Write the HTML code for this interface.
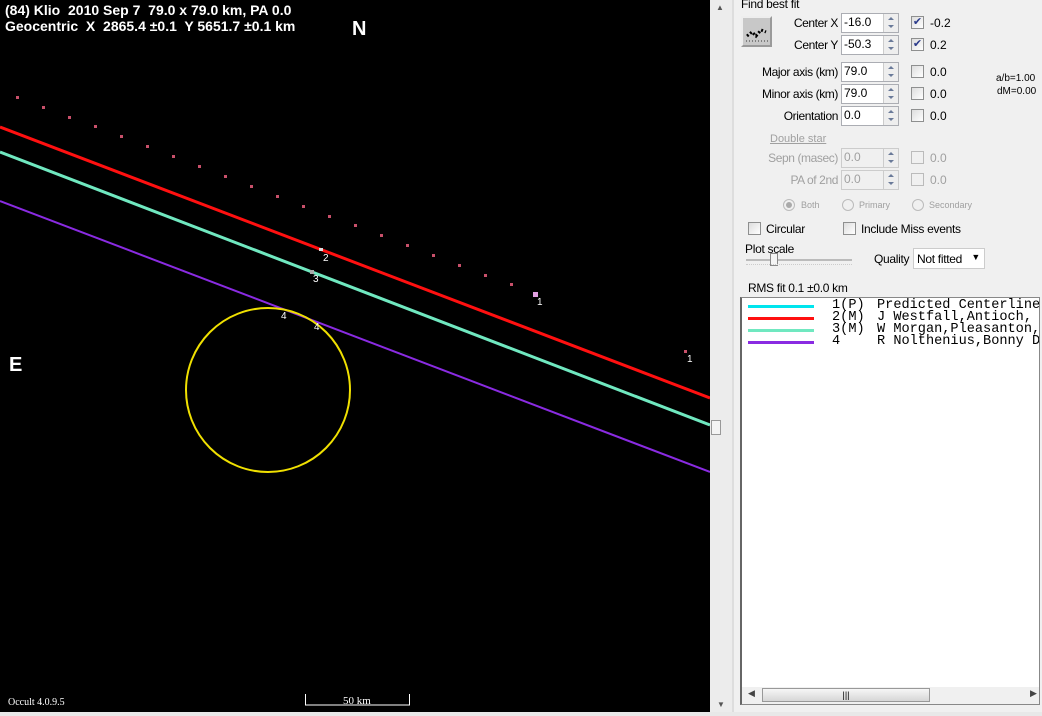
<!DOCTYPE html>
<html><head><meta charset="utf-8"><style>
*{margin:0;padding:0;box-sizing:border-box}
body{width:1042px;height:716px;overflow:hidden;background:#f0f0f0;position:relative;font-family:"Liberation Sans",Arial,sans-serif;font-size:12px;color:#000}
.a{position:absolute;white-space:nowrap}
.r{position:absolute;right:204px;white-space:nowrap;letter-spacing:-0.4px;font-size:12px}
.inp{position:absolute;height:20px;width:58px;background:#fff;border:1px solid #abadb3;font-size:12px;padding:1px 2px}
.spin{position:absolute;right:0;top:0;width:15px;height:18px;border-left:1px solid #ccc;background:#eee}
.spin:before{content:"";position:absolute;left:4px;top:3px;border:3px solid transparent;border-bottom:3px solid #6a7a99;border-top:0}
.spin:after{content:"";position:absolute;left:4px;top:11px;border:3px solid transparent;border-top:3px solid #6a7a99;border-bottom:0}
.cb{position:absolute;width:13px;height:13px;border:1px solid #8e8f8f;background:linear-gradient(135deg,#ddd,#fff)}
.dis{color:#a0a0a0}
.dis .inp{background:#f0f0f0;color:#a0a0a0;border-color:#ccc}
.mono{font-family:"Liberation Mono",monospace;font-size:13.6px;white-space:pre}
</style></head><body>
<svg class="a" style="left:0;top:0" width="710" height="712">
<rect width="710" height="712" fill="#000"/>
<g fill="#c8506a">
<rect x="16" y="96" width="3" height="3"/><rect x="42" y="106" width="3" height="3"/><rect x="68" y="116" width="3" height="3"/><rect x="94" y="125" width="3" height="3"/><rect x="120" y="135" width="3" height="3"/><rect x="146" y="145" width="3" height="3"/><rect x="172" y="155" width="3" height="3"/><rect x="198" y="165" width="3" height="3"/><rect x="224" y="175" width="3" height="3"/><rect x="250" y="185" width="3" height="3"/><rect x="276" y="195" width="3" height="3"/><rect x="302" y="205" width="3" height="3"/><rect x="328" y="215" width="3" height="3"/><rect x="354" y="224" width="3" height="3"/><rect x="380" y="234" width="3" height="3"/><rect x="406" y="244" width="3" height="3"/><rect x="432" y="254" width="3" height="3"/><rect x="458" y="264" width="3" height="3"/><rect x="484" y="274" width="3" height="3"/><rect x="510" y="283" width="3" height="3"/>
</g>
<line x1="0" y1="127" x2="710" y2="398" stroke="#ff1010" stroke-width="3"/>
<line x1="0" y1="152" x2="710" y2="425" stroke="#70e8c0" stroke-width="3"/>
<line x1="0" y1="201" x2="710" y2="472" stroke="#8a2be2" stroke-width="2"/>
<circle cx="268" cy="390" r="82" fill="none" stroke="#f0e000" stroke-width="2"/>
<rect x="533" y="292" width="5" height="5" fill="#e0a0e0"/>
<rect x="684" y="350" width="3" height="3" fill="#c8506a"/>
<rect x="319" y="248" width="4" height="3" fill="#ddd"/>
<rect x="310" y="270" width="4" height="4" fill="#aaa"/>
<g fill="#fff" font-family="Liberation Sans,sans-serif" font-size="10">
<text x="323" y="261">2</text><text x="313" y="282">3</text><text x="281" y="319">4</text><text x="314" y="330">4</text>
<text x="537" y="305">1</text><text x="687" y="362">1</text>
</g>
<g fill="#fff" font-family="Liberation Sans,sans-serif" font-weight="bold" font-size="14" style="white-space:pre">
<text x="5" y="15" xml:space="preserve">(84) Klio  2010 Sep 7  79.0 x 79.0 km, PA 0.0</text>
<text x="5" y="31" xml:space="preserve">Geocentric  X  2865.4 ±0.1  Y 5651.7 ±0.1 km</text>
<text x="352" y="35" font-size="20">N</text>
<text x="9" y="371" font-size="20">E</text>
</g>
<text x="8" y="705" fill="#fff" font-family="Liberation Serif,serif" font-size="10">Occult 4.0.9.5</text>
<path d="M305.5 694v11h104v-11" stroke="#fff" fill="none"/>
<text x="343" y="704" fill="#fff" font-family="Liberation Serif,serif" font-size="11">50 km</text>
</svg>
<div class="a" style="left:0;top:712px;width:1042px;height:4px;background:#e8e8e8"></div>
<div class="a" style="left:710px;top:0;width:24px;height:712px;background:#ececec;border-right:2px solid #ddd"></div>
<div class="a" style="left:716px;top:3px;font-size:8px;color:#555">▲</div>
<div class="a" style="left:711px;top:420px;width:10px;height:15px;background:#f4f4f4;border:1px solid #999"></div>
<div class="a" style="left:717px;top:700px;font-size:8px;color:#555">▼</div>
<div class="a" style="left:741px;top:-3px;font-size:12px;letter-spacing:-0.3px">Find best fit</div>
<div class="a" style="left:741px;top:16px;width:31px;height:31px;background:#c8c8c8;border:2px outset #eee"><svg width="27" height="27"><path d="M4 18l5-4 4 4 5-6 5 2" stroke="#000" stroke-width="3" fill="none" stroke-dasharray="2 2"/><path d="M3 23h22" stroke="#333" stroke-dasharray="1 2"/></svg></div>
<div class="r" style="top:16px">Center X</div>
<div class="r" style="top:38px">Center Y</div>
<div class="r" style="top:65px">Major axis (km)</div>
<div class="r" style="top:87px">Minor axis (km)</div>
<div class="r" style="top:109px">Orientation</div>
<div class="inp" style="left:841px;top:13px">-16.0<div class="spin"></div></div>
<div class="inp" style="left:841px;top:35px">-50.3<div class="spin"></div></div>
<div class="inp" style="left:841px;top:62px">79.0<div class="spin"></div></div>
<div class="inp" style="left:841px;top:84px">79.0<div class="spin"></div></div>
<div class="inp" style="left:841px;top:106px">0.0<div class="spin"></div></div>
<div class="cb" style="left:911px;top:16px;font-size:11px;line-height:11px;color:#2a3a8a;text-align:center">✔</div><div class="a" style="left:930px;top:16px">-0.2</div>
<div class="cb" style="left:911px;top:38px;font-size:11px;line-height:11px;color:#2a3a8a;text-align:center">✔</div><div class="a" style="left:930px;top:38px">0.2</div>
<div class="cb" style="left:911px;top:65px"></div><div class="a" style="left:930px;top:65px">0.0</div>
<div class="cb" style="left:911px;top:87px"></div><div class="a" style="left:930px;top:87px">0.0</div>
<div class="cb" style="left:911px;top:109px"></div><div class="a" style="left:930px;top:109px">0.0</div>
<div class="a" style="left:996px;top:73px;font-size:10px">a/b=1.00</div>
<div class="a" style="left:997px;top:86px;font-size:10px">dM=0.00</div>
<div class="dis">
<div class="a" style="left:770px;top:133px;text-decoration:underline;font-size:11px">Double star</div>
<div class="r" style="top:151px">Sepn (masec)</div>
<div class="r" style="top:173px">PA of 2nd</div>
<div class="inp" style="left:841px;top:148px">0.0<div class="spin"></div></div>
<div class="inp" style="left:841px;top:170px">0.0<div class="spin"></div></div>
<div class="cb" style="left:911px;top:151px;background:#f0f0f0;border-color:#bbb"></div><div class="a" style="left:930px;top:151px">0.0</div>
<div class="cb" style="left:911px;top:173px;background:#f0f0f0;border-color:#bbb"></div><div class="a" style="left:930px;top:173px">0.0</div>
<div class="a" style="left:783px;top:199px;width:12px;height:12px;border:1px solid #bbb;border-radius:50%"><div style="margin:2px;width:6px;height:6px;border-radius:50%;background:#aaa"></div></div><div class="a" style="left:801px;top:200px;font-size:9px">Both</div>
<div class="a" style="left:842px;top:199px;width:12px;height:12px;border:1px solid #bbb;border-radius:50%"></div><div class="a" style="left:859px;top:200px;font-size:9px">Primary</div>
<div class="a" style="left:912px;top:199px;width:12px;height:12px;border:1px solid #bbb;border-radius:50%"></div><div class="a" style="left:929px;top:200px;font-size:9px">Secondary</div>
</div>
<div class="cb" style="left:748px;top:222px"></div><div class="a" style="left:766px;top:222px;letter-spacing:-0.3px">Circular</div>
<div class="cb" style="left:843px;top:222px"></div><div class="a" style="left:861px;top:222px;letter-spacing:-0.3px">Include Miss events</div>
<div class="a" style="left:745px;top:242px;letter-spacing:-0.3px">Plot scale</div>
<div class="a" style="left:746px;top:259px;width:106px;height:2px;background:#bbb"></div>
<div class="a" style="left:770px;top:253px;width:8px;height:13px;background:#f4f4f4;border:1px solid #888"></div>
<div class="a" style="left:746px;top:264px;width:106px;border-top:1px dotted #ccc;height:6px"></div>
<div class="a" style="left:874px;top:252px;letter-spacing:-0.3px">Quality</div>
<div class="a" style="left:913px;top:248px;width:72px;height:21px;background:#fff;border:1px solid #ccc;padding:3px;letter-spacing:-0.3px">Not fitted<span style="position:absolute;right:4px;top:3px;font-size:9px">▼</span></div>
<div class="a" style="left:748px;top:281px;letter-spacing:-0.3px">RMS fit  0.1 ±0.0 km</div>
<div class="a" style="left:740px;top:297px;width:300px;height:408px;background:#fff;border:1px solid #888;border-left:2px solid #666;overflow:hidden">
<div class="a" style="left:6px;top:7px;width:66px;height:3px;background:#00e5ee"></div>
<div class="a" style="left:6px;top:19px;width:66px;height:3px;background:#ff1010"></div>
<div class="a" style="left:6px;top:31px;width:66px;height:3px;background:#70e8c0"></div>
<div class="a" style="left:6px;top:43px;width:66px;height:3px;background:#8a2be2"></div>
<div class="a mono" style="left:90px;top:2px;line-height:12px">1(P)
2(M)
3(M)
4</div>
<div class="a mono" style="left:135px;top:2px;line-height:12px">Predicted Centerline
J Westfall,Antioch,
W Morgan,Pleasanton,
R Nolthenius,Bonny D</div>
<div class="a" style="left:0;top:389px;width:298px;height:17px;background:#f0f0f0"></div>
<div class="a" style="left:6px;top:390px;font-size:9px;color:#444">◀</div>
<div class="a" style="left:20px;top:390px;width:168px;height:14px;background:linear-gradient(#f6f6f6,#d6d6d6);border:1px solid #999;text-align:center;font-size:9px;line-height:12px">|||</div>
<div class="a" style="left:288px;top:390px;font-size:9px;color:#444">▶</div>
</div>
</body></html>
